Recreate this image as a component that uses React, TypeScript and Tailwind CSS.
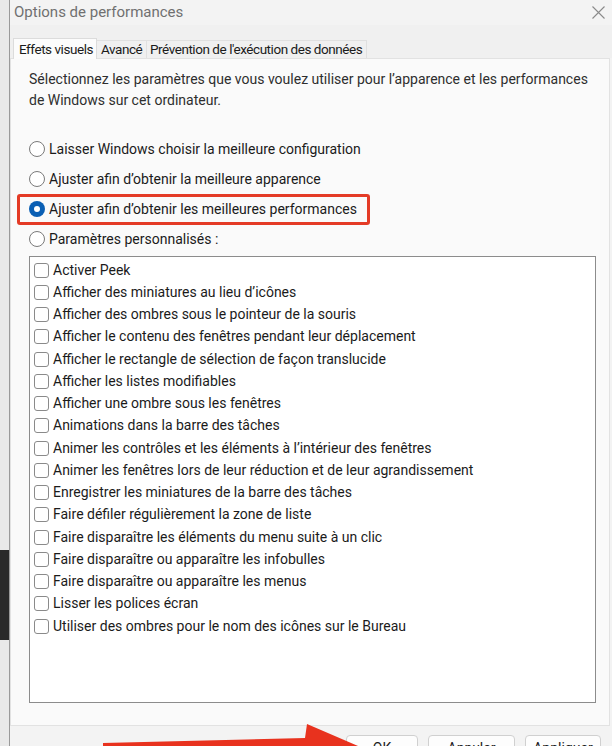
import React from 'react';

const options = [
  'Activer Peek',
  "Afficher des miniatures au lieu d’icônes",
  'Afficher des ombres sous le pointeur de la souris',
  'Afficher le contenu des fenêtres pendant leur déplacement',
  'Afficher le rectangle de sélection de façon translucide',
  'Afficher les listes modifiables',
  'Afficher une ombre sous les fenêtres',
  'Animations dans la barre des tâches',
  'Animer les contrôles et les éléments à l’intérieur des fenêtres',
  'Animer les fenêtres lors de leur réduction et de leur agrandissement',
  'Enregistrer les miniatures de la barre des tâches',
  'Faire défiler régulièrement la zone de liste',
  'Faire disparaître les éléments du menu suite à un clic',
  'Faire disparaître ou apparaître les infobulles',
  'Faire disparaître ou apparaître les menus',
  'Lisser les polices écran',
  'Utiliser des ombres pour le nom des icônes sur le Bureau',
];

const radios = [
  'Laisser Windows choisir la meilleure configuration',
  'Ajuster afin d’obtenir la meilleure apparence',
  'Ajuster afin d’obtenir les meilleures performances',
  'Paramètres personnalisés :',
];

const Radio: React.FC<{ checked?: boolean }> = ({ checked }) =>
  checked ? (
    <span className="w-[16px] h-[16px] rounded-full bg-[#0a5fb4] flex items-center justify-center shrink-0">
      <span className="w-[6px] h-[6px] rounded-full bg-white" />
    </span>
  ) : (
    <span className="w-[16px] h-[16px] rounded-full border border-[#7a7a7a] bg-white shrink-0" />
  );

const App: React.FC = () => {
  return (
    <div
      className="relative w-[612px] h-[746px] overflow-hidden flex bg-[#f3f3f3] text-[#1b1b1b]"
      style={{ fontFamily: 'Roboto, "Noto Sans", sans-serif' }}
    >
      {/* background window peeking on the left */}
      <div className="w-[10px] shrink-0 flex flex-col border-r border-[#9a9a9a] bg-[#e9e9e9]">
        <div className="h-[550px]" />
        <div className="h-[90px] bg-[#2a2a2a]" />
        <div className="flex-1" />
      </div>

      <div className="flex-1 flex flex-col min-w-0">
        {/* title bar */}
        <div className="h-[25px] shrink-0 flex items-center justify-between pl-[4px] pr-[7px]">
          <span className="text-[15px] text-[#707070]">Options de performances</span>
          <svg width="13" height="13" viewBox="0 0 13 13">
            <path d="M0.5 0.5 L12.5 12.5 M12.5 0.5 L0.5 12.5" stroke="#8a8a8a" strokeWidth="1.1" />
          </svg>
        </div>

        {/* tabs */}
        <div className="h-[33px] shrink-0 flex items-end pl-[3px] text-[13.5px] tracking-[-0.45px] bg-[#f0f0f0]">
          <div className="h-[21px] w-[84px] pl-[5px] flex items-center bg-[#fcfcfc] border border-b-0 border-[#dcdcdc] relative top-[1px]">
            Effets visuels
          </div>
          <div className="h-[18px] w-[50px] pl-[4px] flex items-center border-t border-r border-[#e0e0e0]">
            Avancé
          </div>
          <div className="h-[18px] w-[220px] pl-[3px] flex items-center border-t border-r border-[#e0e0e0]">
            Prévention de l'exécution des données
          </div>
        </div>

        {/* tab panel */}
        <div className="h-[668px] shrink-0 mr-[2px] bg-[#fafafa] border border-[#e2e2e2] flex flex-col pl-[18px] pr-[8px]">
          <p className="text-[14px] leading-[21px] text-[#2e2e2e] mt-[10px]">
            Sélectionnez les paramètres que vous voulez utiliser pour l’apparence et les performances de Windows sur cet ordinateur.
          </p>

          <div className="mt-[23px] flex flex-col text-[14px]">
            {radios.map((r, i) => (
              <div key={r} className="h-[30px] flex items-center">
                {i === 2 ? (
                  <div className="ml-[-12px] h-[31px] pl-[9px] pr-[10px] flex items-center gap-[4px] border-[3px] border-[#e43b26] rounded-[3px]">
                    <Radio checked />
                    <span>{r}</span>
                  </div>
                ) : (
                  <div className="flex items-center gap-[4px]">
                    <Radio />
                    <span>{r}</span>
                  </div>
                )}
              </div>
            ))}
          </div>

          {/* options list */}
          <div className="mt-[2px] mr-[5px] h-[447px] bg-white border border-[#8c8c8c] pt-[2px] pl-[4px] flex flex-col">
            {options.map((o) => (
              <div key={o} className="h-[22.25px] flex items-center gap-[4px] text-[14px]">
                <span className="w-[15px] h-[15px] rounded-[3px] border border-[#8a8a8a] bg-white shrink-0" />
                <span>{o}</span>
              </div>
            ))}
          </div>
        </div>

        {/* buttons */}
        <div className="flex justify-end gap-[10px] pr-[11px] pt-[9px] text-[14px]">
          <button className="w-[72px] h-[28px] bg-[#fdfdfd] border border-[#d0d0d0] rounded-[4px] flex items-start justify-center pt-[2px]">OK</button>
          <button className="w-[87px] h-[28px] bg-[#fdfdfd] border border-[#d0d0d0] rounded-[4px] flex items-start justify-center pt-[2px]">Annuler</button>
          <button className="w-[76px] h-[28px] bg-[#fdfdfd] border border-[#d0d0d0] rounded-[4px] flex items-start justify-center pt-[2px]">Appliquer</button>
        </div>
      </div>

      {/* red arrow annotation */}
      <svg className="absolute left-0 bottom-0" width="612" height="30" viewBox="0 0 612 30">
        <polygon points="103,27 305,22 307,8 372,36 103,36" fill="#e8321e" />
      </svg>
    </div>
  );
};

export default App;
